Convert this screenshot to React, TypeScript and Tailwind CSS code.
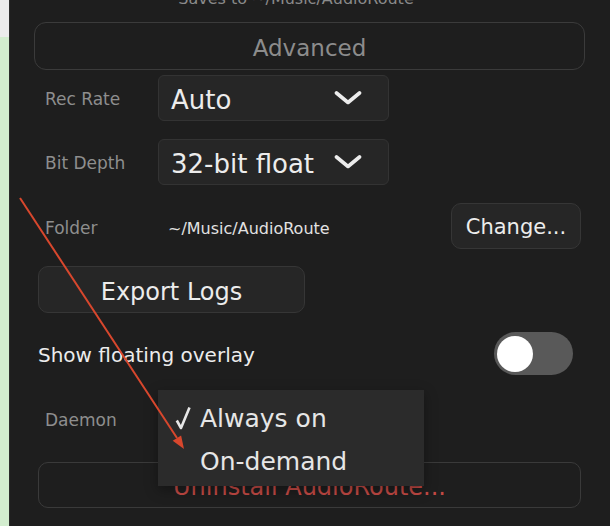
import type { ReactNode } from "react";

const font = { fontFamily: '"DejaVu Sans", "Liberation Sans", sans-serif' };

function Chevron() {
  return (
    <svg width="28" height="16" viewBox="0 0 28 16" className="shrink-0">
      <path d="M2.5 3 L14 12.5 L25.5 3" fill="none" stroke="#ececec" strokeWidth="3.6" strokeLinecap="round" strokeLinejoin="round" />
    </svg>
  );
}

function Check() {
  return (
    <svg width="16" height="24" viewBox="0 0 16 24" className="shrink-0">
      <path d="M1.8 14.5 L6 22 L14.5 1.5" fill="none" stroke="#e6e6e6" strokeWidth="2.6" strokeLinejoin="round" />
    </svg>
  );
}

function Field({ label, value, className = "" }: { label: string; value: string; className?: string }) {
  return (
    <div className={`flex h-[46px] items-center pl-[35px] ${className}`}>
      <span className="w-[113px] pt-[4px] text-[17px] text-[#8e8e8e]">{label}</span>
      <div className="flex h-[46px] w-[231px] items-center justify-between rounded-[6px] border border-[#333333] bg-[#262626] pl-[12px] pr-[26px]">
        <span className="pt-[4px] text-[26px] leading-none text-[#ececec]">{value}</span>
        <Chevron />
      </div>
    </div>
  );
}

function Button({ children, className = "" }: { children: ReactNode; className?: string }) {
  return (
    <div className={`flex items-center justify-center rounded-[10px] border border-[#363636] bg-[#262626] pt-[4px] text-[#ececec] ${className}`}>
      {children}
    </div>
  );
}

export default function App() {
  return (
    <div className="relative flex h-[526px] w-[610px] overflow-hidden bg-[#1e1e1e]" style={font}>
      <div className="flex w-[9px] shrink-0 flex-col">
        <div className="h-[37px] bg-[#ececec]" />
        <div className="flex-1 bg-[#d3edcf]" />
      </div>

      <div className="flex flex-1 flex-col border-l border-[#2c2c2c]">
        <p className="-mt-[11px] h-[20px] pr-[28px] text-center text-[16px] leading-[20px] text-[#8a8a8a]">
          Saves to ~/Music/AudioRoute
        </p>

        <div className="ml-[24px] mr-[25px] mt-[13px] flex h-[48px] items-center justify-center rounded-[12px] border border-[#3b3b3b] pt-[4px] text-[23px] text-[#8c8c8c]">
          Advanced
        </div>

        <Field label="Rec Rate" value="Auto" className="mt-[5px]" />
        <Field label="Bit Depth" value="32-bit float" className="mt-[18px]" />

        <div className="mt-[18px] flex h-[46px] items-center pl-[35px] pr-[29px]">
          <span className="w-[123px] pt-[5px] text-[17px] text-[#8e8e8e]">Folder</span>
          <span className="pt-[5px] text-[16px] text-[#e2e2e2]">~/Music/AudioRoute</span>
          <Button className="ml-auto h-[46px] w-[130px] text-[21px]">Change...</Button>
        </div>

        <div className="mt-[17px] pl-[28px]">
          <Button className="h-[47px] w-[267px] text-[24px]">Export Logs</Button>
        </div>

        <div className="mt-[19px] flex h-[43px] items-center justify-between pl-[28px] pr-[37px]">
          <span className="pt-[2px] text-[20px] text-[#ececec]">Show floating overlay</span>
          <div className="flex h-[43px] w-[79px] items-center rounded-full bg-[#595959] pl-[3px]">
            <div className="h-[36px] w-[36px] rounded-full bg-white" />
          </div>
        </div>

        <div className="mt-[21px] flex h-[46px] items-center pl-[35px]">
          <span className="pt-[3px] text-[17px] text-[#8e8e8e]">Daemon</span>
        </div>

        <div className="ml-[28px] mr-[29px] mt-[20px] flex h-[46px] items-center justify-center rounded-[10px] border border-[#3a3a3a] pt-[4px] text-[24px] text-[#c44a45]">
          Uninstall AudioRoute...
        </div>
      </div>

      <div className="absolute left-[158px] top-[390px] flex h-[96px] w-[266px] flex-col bg-[#2b2b2b] pt-[6px] shadow-[0_4px_12px_rgba(0,0,0,0.35)]">
        <div className="flex h-[43px] items-center whitespace-nowrap text-[25px] text-[#e6e6e6]">
          <span className="flex w-[42px] shrink-0 pl-[17px]">
            <Check />
          </span>
          <span className="pt-[2px]">Always on</span>
        </div>
        <div className="flex h-[43px] items-center whitespace-nowrap pl-[42px] pt-[2px] text-[25px] text-[#e6e6e6]">On-demand</div>
      </div>

      <svg className="pointer-events-none absolute inset-0" width="610" height="526">
        <line x1="20" y1="198" x2="177" y2="438" stroke="#d8472d" strokeWidth="2" />
        <polygon points="184,449 172.7,440.8 181.1,435.4" fill="#d8472d" />
      </svg>
    </div>
  );
}
